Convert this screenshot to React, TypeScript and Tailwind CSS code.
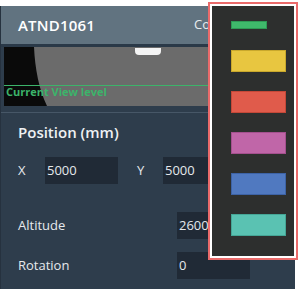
import React from 'react';

const swatches = [
  { color: 'bg-[#3fb96b]', border: 'border-[#2e9a55]' },
  { color: 'bg-[#e8c640]', border: 'border-[#c9a82c]' },
  { color: 'bg-[#e05b4b]', border: 'border-[#c44838]' },
  { color: 'bg-[#c066a8]', border: 'border-[#a4508e]' },
  { color: 'bg-[#5079c0]', border: 'border-[#3d63a6]' },
  { color: 'bg-[#5ac2b2]', border: 'border-[#45a696]' },
];

function Field({ value }: { value: string }) {
  return (
    <div className="w-[73px] h-[27px] bg-[#202a36] flex items-center pl-[2px] text-[13px] text-[#e4e8ec]">
      {value}
    </div>
  );
}

export default function App() {
  return (
    <div
      className="relative w-[300px] h-[289px] bg-white overflow-hidden"
      style={{ fontFamily: '"Open Sans", "Noto Sans", sans-serif' }}
    >
      <div className="mt-[6px] w-[295px] h-[283px] bg-[#2e3d4c] border-l border-[#26323f] flex flex-col">
        {/* Header */}
        <div className="h-[38px] shrink-0 bg-[#617380] flex items-center pl-[17px] text-white">
          <span className="text-[15px] font-semibold tracking-[0.2px]">ATND1061</span>
          <span className="ml-[99px] text-[13px] text-[#e8ecef]">Coordinates</span>
        </div>
        <div className="h-[3px] shrink-0 bg-[#2a3948]" />

        {/* Viewport */}
        <div className="relative ml-[3px] mr-[4px] h-[59px] shrink-0 bg-[#6b6b6b] overflow-hidden">
          <svg className="absolute inset-0" width="287" height="59" viewBox="0 0 287 59">
            <path d="M0 0 H30 C31 22 35 42 43 59 H0 Z" fill="#0a0a0a" />
            <path d="M131 1 H157 V4 Q157 8 153 8 H135 Q131 8 131 4 Z" fill="#f4f4f4" />
            <line x1="0" y1="38.5" x2="287" y2="38.5" stroke="#3cb46a" strokeWidth="1" />
          </svg>
          <span className="absolute left-[2px] top-[38px] text-[11px] leading-[14px] font-bold text-[#3cb46a]">
            Current View level
          </span>
        </div>

        <div className="h-[1px] shrink-0 mt-[6px] bg-[#475767]" />

        {/* Position */}
        <div className="pl-[17px] mt-[9px] text-[15px] leading-[20px] font-semibold text-[#eef1f3]">
          Position (mm)
        </div>

        <div className="flex items-center mt-[15px] pl-[17px] text-[13px] text-[#e6e9ec]">
          <span className="w-[27px]">X</span>
          <Field value="5000" />
          <span className="ml-[19px] w-[26px]">Y</span>
          <Field value="5000" />
        </div>

        <div className="flex items-center mt-[28px] pl-[17px] text-[13px] text-[#e6e9ec]">
          <span className="w-[159px]">Altitude</span>
          <Field value="2600" />
        </div>

        <div className="flex items-center mt-[13px] pl-[17px] text-[13px] text-[#e6e9ec]">
          <span className="w-[159px]">Rotation</span>
          <Field value="0" />
        </div>
      </div>

      {/* Colour menu */}
      <div className="absolute left-[208px] top-[2px] w-[90px] h-[258px] border-2 border-[#ea6b6b] bg-white p-[2px]">
        <div className="w-full h-full bg-[#2d2f2e] flex flex-col pl-[19px] pt-[15px]">
          <div className={`w-[36px] h-[8px] border ${swatches[0].color} ${swatches[0].border}`} />
          <div className="flex flex-col gap-[19px] mt-[21px]">
            {swatches.slice(1).map((s, i) => (
              <div key={i} className={`w-[55px] h-[22px] border ${s.color} ${s.border}`} />
            ))}
          </div>
        </div>
      </div>
    </div>
  );
}
